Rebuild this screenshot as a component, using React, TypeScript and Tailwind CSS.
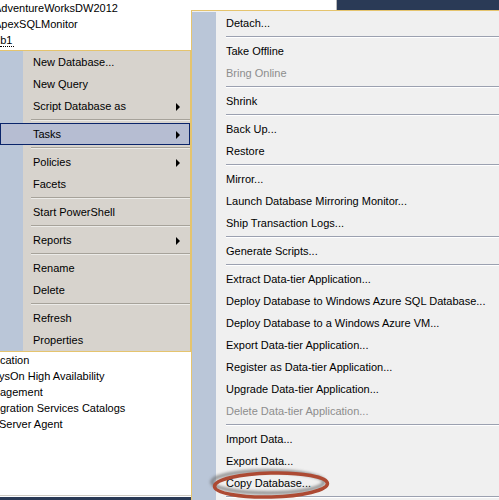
import React from 'react';

type Entry =
  | { kind: 'item'; label: string; arrow?: boolean; disabled?: boolean; active?: boolean }
  | { kind: 'sep' };

const item = (label: string, opts: { arrow?: boolean; disabled?: boolean; active?: boolean } = {}): Entry => ({
  kind: 'item',
  label,
  ...opts,
});
const sep: Entry = { kind: 'sep' };

const OBJECT_MENU: Entry[] = [
  item('New Database...'),
  item('New Query'),
  item('Script Database as', { arrow: true }),
  sep,
  item('Tasks', { arrow: true, active: true }),
  sep,
  item('Policies', { arrow: true }),
  item('Facets'),
  sep,
  item('Start PowerShell'),
  sep,
  item('Reports', { arrow: true }),
  sep,
  item('Rename'),
  item('Delete'),
  sep,
  item('Refresh'),
  item('Properties'),
];

const TASKS_MENU: Entry[] = [
  item('Detach...'),
  sep,
  item('Take Offline'),
  item('Bring Online', { disabled: true }),
  sep,
  item('Shrink'),
  sep,
  item('Back Up...'),
  item('Restore'),
  sep,
  item('Mirror...'),
  item('Launch Database Mirroring Monitor...'),
  item('Ship Transaction Logs...'),
  sep,
  item('Generate Scripts...'),
  sep,
  item('Extract Data-tier Application...'),
  item('Deploy Database to Windows Azure SQL Database...'),
  item('Deploy Database to a Windows Azure VM...'),
  item('Export Data-tier Application...'),
  item('Register as Data-tier Application...'),
  item('Upgrade Data-tier Application...'),
  item('Delete Data-tier Application...', { disabled: true }),
  sep,
  item('Import Data...'),
  item('Export Data...'),
  item('Copy Database...'),
  sep,
];

const SubArrow = () => (
  <span className="h-0 w-0 border-y-[4px] border-l-[4px] border-y-transparent border-l-black" />
);

// classic-style context menu (grey body)
const ObjectMenu = () => (
  <div className="flex flex-col border-y border-r border-[#e5c46e] bg-[#d7d3cd]">
    {OBJECT_MENU.map((e, i) =>
      e.kind === 'sep' ? (
        <div key={i} className="flex h-[6px]">
          <div className="w-[23px] bg-[#bac6d8]" />
          <div className="flex flex-1 flex-col justify-center pl-[8px]">
            <div className="border-t border-b border-t-[#a6a29a] border-b-[#ecebe8]" />
          </div>
        </div>
      ) : e.active ? (
        <div key={i} className="flex h-[22px] items-center border border-[#0a246a] bg-[#b6bdd2] pl-[32px] pr-[9px] pt-[1px]">
          <span className="flex-1">{e.label}</span>
          <SubArrow />
        </div>
      ) : (
        <div key={i} className="flex h-[22px]">
          <div className="w-[23px] bg-[#bac6d8]" />
          <div className="flex flex-1 items-center pl-[10px] pr-[10px] pt-[1px]">
            <span className="flex-1">{e.label}</span>
            {e.arrow && <SubArrow />}
          </div>
        </div>
      )
    )}
  </div>
);

const TasksMenu = () => (
  <div className="flex flex-1 flex-col border-l border-t border-[#e5c46e] bg-[#f0f0f0] pt-[1px]">
    {TASKS_MENU.map((e, i) =>
      e.kind === 'sep' ? (
        <div key={i} className="flex h-[6px]">
          <div className="w-[24px] bg-[#bac6d8]" />
          <div className="flex flex-1 flex-col justify-center pl-[10px]">
            <div className="border-t border-b border-t-[#9ba1b0] border-b-white" />
          </div>
        </div>
      ) : (
        <div key={i} className="flex h-[22px]">
          <div className="w-[24px] bg-[#bac6d8]" />
          <div className={`flex flex-1 items-center whitespace-nowrap pl-[10px] pt-[1px] ${e.disabled ? 'text-[#8d8d8d]' : ''}`}>
            {e.label}
          </div>
        </div>
      )
    )}
    <div className="flex flex-1">
      <div className="w-[24px] bg-[#bac6d8]" />
    </div>
  </div>
);

const Highlight = () => (
  <svg className="pointer-events-none absolute left-[206px] top-[465px]" width="134" height="38" viewBox="0 0 134 38">
    <defs>
      <filter id="soft" x="-20%" y="-50%" width="140%" height="200%">
        <feGaussianBlur stdDeviation="1.8" />
      </filter>
    </defs>
    <ellipse cx="62" cy="17" rx="56" ry="11" fill="none" stroke="#6f6f6f" strokeWidth="3.5" filter="url(#soft)" opacity="0.75" />
    <ellipse cx="65" cy="20" rx="56.5" ry="12" fill="none" stroke="#ad4a33" strokeWidth="3.5" transform="rotate(-1.5 65 20)" />
  </svg>
);

export default function App() {
  return (
    <div
      className="relative flex h-[500px] w-[499px] overflow-hidden bg-white text-[11px] text-black"
      style={{ fontFamily: '"Liberation Sans", Arial, sans-serif' }}
    >
      {/* object explorer + first context menu */}
      <div className="flex w-[191px] shrink-0 flex-col">
        <div className="flex flex-col pb-[2px] leading-[16px]">
          <div className="ml-[-6px] h-[16px] whitespace-nowrap">AdventureWorksDW2012</div>
          <div className="ml-[-6px] h-[16px] whitespace-nowrap">ApexSQLMonitor</div>
          <div className="ml-[-6px] h-[16px] whitespace-nowrap">
            d<span className="border-b border-dotted border-black pr-[2px]">b1</span>
          </div>
        </div>
        <ObjectMenu />
        <div className="flex flex-col whitespace-nowrap leading-[16px]">
          <div className="h-[16px]">cation</div>
          <div className="ml-[-1px] h-[16px]">ysOn High Availability</div>
          <div className="h-[16px]">agement</div>
          <div className="h-[16px]">gration Services Catalogs</div>
          <div className="ml-[-1px] h-[16px]"> Server Agent</div>
        </div>
        <div className="flex-1" />
        <div className="h-[1px] bg-[#cfcbc3]" />
        <div className="h-[1px]" />
        <div className="h-[3px] bg-[#2a3a56]" />
      </div>

      {/* Tasks submenu */}
      <div className="flex flex-1 flex-col">
        <div className="flex h-[10px]">
          <div className="w-[145px] bg-white" />
          <div className="w-[1px] bg-[#b8b8b8]" />
          <div className="flex-1 bg-[#2a3a56]" />
        </div>
        <TasksMenu />
      </div>

      <Highlight />
    </div>
  );
}
